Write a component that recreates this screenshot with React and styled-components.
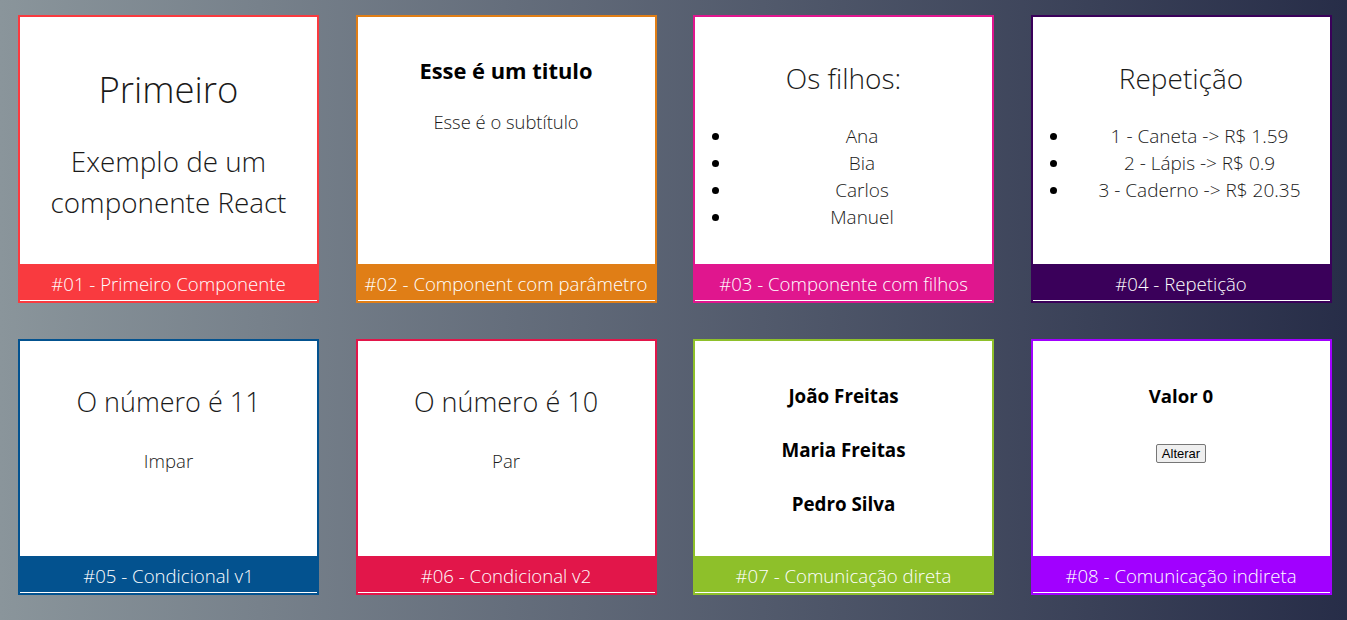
import styled, { createGlobalStyle } from "styled-components";

const GlobalStyle = createGlobalStyle`
  html, body {
    margin: 0;
    padding: 0;
  }
  body {
    min-height: 100vh;
    background: linear-gradient(to right, #8a959b, #272d48);
    font-family: "Open Sans", "Noto Sans", sans-serif;
    font-weight: 300;
    color: #1a1a1a;
  }
`;

const Cards = styled.div`
  display: grid;
  grid-template-columns: repeat(4, 301px);
  grid-template-rows: 288px 256px;
  column-gap: 36.5px;
  row-gap: 36px;
  padding: 15px 0 25px 18px;
`;

const Card = styled.div`
  display: flex;
  flex-direction: column;
  border: 2px solid ${(p) => p.$color};
  background: #fff;
`;

const Content = styled.div`
  flex: 1;
  display: flex;
  flex-direction: column;
  align-items: center;
  text-align: center;
`;

const Footer = styled.div`
  height: 37px;
  box-sizing: border-box;
  padding-top: 6px;
  background: ${(p) => p.$color};
  border-bottom: 1px solid #fff;
  color: #fff;
  font-size: 18.6px;
  line-height: 27px;
  text-align: center;
  white-space: nowrap;
`;

const BigTitle = styled.h1`
  margin: 50px 0 0;
  font-size: 36.5px;
  line-height: 44px;
  font-weight: 300;
`;

const Lead = styled.p`
  margin: 30px 0 0;
  font-size: 27.8px;
  line-height: 41px;
`;

const Title = styled.h2`
  margin: 43px 0 0;
  font-size: ${(p) => p.$size ?? 28}px;
  line-height: 36px;
  font-weight: 300;
`;

const Strong = styled.h3`
  margin: ${(p) => p.$top ?? 0}px 0 0;
  font-size: ${(p) => p.$size}px;
  line-height: ${(p) => p.$lh}px;
  font-weight: 700;
  color: #000;
`;

const Text = styled.p`
  margin: ${(p) => p.$top}px 0 0;
  font-size: ${(p) => p.$size}px;
  line-height: ${(p) => p.$lh}px;
`;

const List = styled.ul`
  align-self: stretch;
  margin: 27px 0 0;
  padding: 0 0 0 37px;
  font-size: 19px;
  line-height: 27px;
  li::marker {
    color: #000;
  }
`;

const Button = styled.button`
  margin-top: 21px;
  padding: 1px 5px;
  font: 13px "Liberation Sans", Arial, sans-serif;
  color: #000;
  background: #efefef;
  border: 1px solid #767676;
  border-radius: 2px;
`;

const children = ["Ana", "Bia", "Carlos", "Manuel"];

const products = [
  { id: 1, nome: "Caneta", preco: 1.59 },
  { id: 2, nome: "Lápis", preco: 0.9 },
  { id: 3, nome: "Caderno", preco: 20.35 },
];

const cards = [
  {
    title: "#01 - Primeiro Componente",
    color: "#f93a3f",
    body: (
      <>
        <BigTitle>Primeiro</BigTitle>
        <Lead>
          Exemplo de um
          <br />
          componente React
        </Lead>
      </>
    ),
  },
  {
    title: "#02 - Component com parâmetro",
    color: "#e07e16",
    body: (
      <>
        <Strong $top={40} $size={21.9} $lh={28}>
          Esse é um titulo
        </Strong>
        <Text $top={25} $size={18.4} $lh={24}>
          Esse é o subtítulo
        </Text>
      </>
    ),
  },
  {
    title: "#03 - Componente com filhos",
    color: "#e0168e",
    body: (
      <>
        <Title>Os filhos:</Title>
        <List>
          {children.map((nome) => (
            <li key={nome}>{nome}</li>
          ))}
        </List>
      </>
    ),
  },
  {
    title: "#04 - Repetição",
    color: "#3a005a",
    body: (
      <>
        <Title>Repetição</Title>
        <List>
          {products.map((p) => (
            <li key={p.id}>
              {p.id} - {p.nome} -&gt; R$ {p.preco}
            </li>
          ))}
        </List>
      </>
    ),
  },
  {
    title: "#05 - Condicional v1",
    color: "#03528f",
    body: (
      <>
        <Title $size={27}>O número é 11</Title>
        <Text $top={27} $size={18.6} $lh={27}>
          Impar
        </Text>
      </>
    ),
  },
  {
    title: "#06 - Condicional v2",
    color: "#e2164a",
    body: (
      <>
        <Title $size={27}>O número é 10</Title>
        <Text $top={27} $size={18.6} $lh={27}>
          Par
        </Text>
      </>
    ),
  },
  {
    title: "#07 - Comunicação direta",
    color: "#8ec02a",
    body: (
      <>
        <Strong $top={28} $size={18.8} $lh={54}>
          João Freitas
        </Strong>
        <Strong $size={18.8} $lh={54}>
          Maria Freitas
        </Strong>
        <Strong $size={18.8} $lh={54}>
          Pedro Silva
        </Strong>
      </>
    ),
  },
  {
    title: "#08 - Comunicação indireta",
    color: "#a100ff",
    body: (
      <>
        <Strong $top={28} $size={18.6} $lh={54}>
          Valor 0
        </Strong>
        <Button>Alterar</Button>
      </>
    ),
  },
];

export default function App() {
  return (
    <>
      <GlobalStyle />
      <Cards>
        {cards.map((card) => (
          <Card key={card.title} $color={card.color}>
            <Content>{card.body}</Content>
            <Footer $color={card.color}>{card.title}</Footer>
          </Card>
        ))}
      </Cards>
    </>
  );
}
